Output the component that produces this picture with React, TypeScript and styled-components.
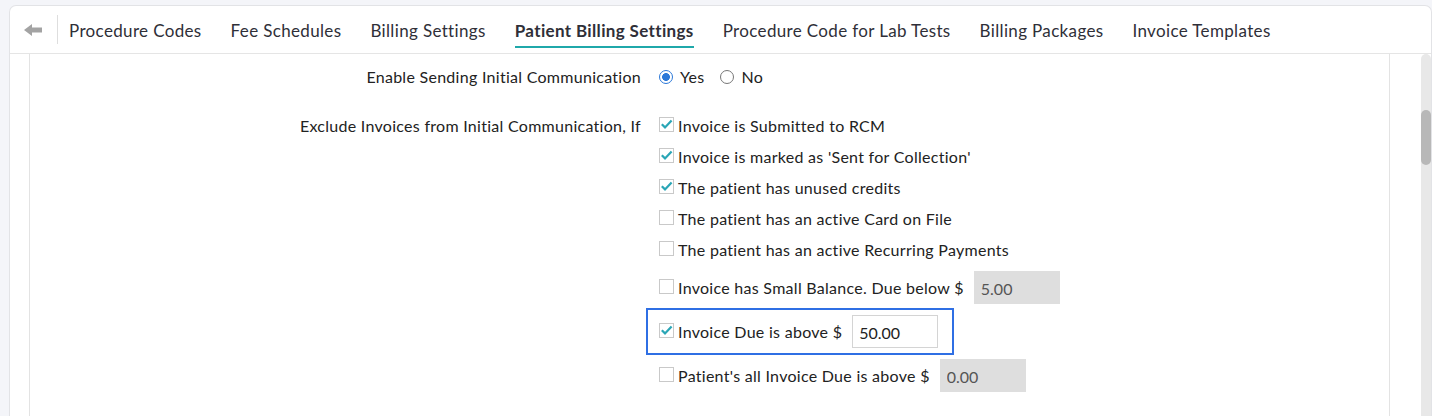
import React from 'react';
import styled, {createGlobalStyle} from 'styled-components';

const GlobalStyle = createGlobalStyle`
    body {
        margin: 0;
        background: #f4f5f9;
        font-family: Lato, "Noto Sans", "Liberation Sans", sans-serif;
        overflow: hidden;
    }
`;

const tabs = [
    'Procedure Codes',
    'Fee Schedules',
    'Billing Settings',
    'Patient Billing Settings',
    'Procedure Code for Lab Tests',
    'Billing Packages',
    'Invoice Templates',
];

type Option = {
    label: string;
    checked: boolean;
    amount?: string;
    highlight?: boolean;
};

const options: Option[] = [
    {label: 'Invoice is Submitted to RCM', checked: true},
    {label: "Invoice is marked as 'Sent for Collection'", checked: true},
    {label: 'The patient has unused credits', checked: true},
    {label: 'The patient has an active Card on File', checked: false},
    {label: 'The patient has an active Recurring Payments', checked: false},
    {label: 'Invoice has Small Balance. Due below $', checked: false, amount: '5.00'},
    {label: 'Invoice Due is above $', checked: true, amount: '50.00', highlight: true},
    {label: "Patient's all Invoice Due is above $", checked: false, amount: '0.00'},
];

const CheckBox: React.FC<{checked: boolean}> = ({checked}) => (
    <CheckSvg width="15" height="15" viewBox="0 0 15 15">
        <rect x="0.5" y="0.5" width="14" height="14" fill="#fff" stroke="#c9c9c9"/>
        {checked && <polyline points="2.8,7.2 6,10.4 12.6,3.4" fill="none" stroke="#2aa6b6" strokeWidth="2.2"/>}
    </CheckSvg>
);

const BackArrow = () => (
    <svg width="18" height="12" viewBox="0 0 18 12">
        <polygon points="0,6 8,0 8,3.5 18,3.5 18,8.5 8,8.5 8,12" fill="#a3a3a3"/>
    </svg>
);

const App: React.FunctionComponent = () => {
    return (
        <>
            <GlobalStyle/>
            <Page>
                <Card>
                    <TabBar>
                        <BackButton title="Back"><BackArrow/></BackButton>
                        <TabList>
                            {tabs.map(t => (
                                <Tab key={t} $active={t === 'Patient Billing Settings'}>{t}</Tab>
                            ))}
                        </TabList>
                    </TabBar>
                    <Body>
                        <Gutter/>
                        <Panel>
                            <FormRow>
                                <FieldLabel>Enable Sending Initial Communication</FieldLabel>
                                <RadioGroup>
                                    <RadioOption><Radio $checked/>Yes</RadioOption>
                                    <RadioOption><Radio $checked={false}/>No</RadioOption>
                                </RadioGroup>
                            </FormRow>
                            <FormRow $spaced>
                                <FieldLabel>Exclude Invoices from Initial Communication, If</FieldLabel>
                                <OptionList>
                                    {options.map(o => (
                                        <OptionRow key={o.label} $highlight={o.highlight} $tall={!!o.amount}>
                                            <CheckBox checked={o.checked}/>
                                            <OptionText>{o.label}</OptionText>
                                            {o.amount && (
                                                <AmountInput
                                                    defaultValue={o.amount}
                                                    disabled={!o.checked}
                                                />
                                            )}
                                        </OptionRow>
                                    ))}
                                </OptionList>
                            </FormRow>
                        </Panel>
                        <ScrollArea>
                            <ScrollTrack>
                                <ScrollThumb/>
                            </ScrollTrack>
                        </ScrollArea>
                    </Body>
                </Card>
            </Page>
        </>
    );
}

const Page = styled.div`
    padding: 5px 0 0 9px;
`;

const Card = styled.div`
    background: #fff;
    border: 1px solid #e2e3e6;
    border-bottom: none;
    border-radius: 7px 7px 0 0;
`;

const TabBar = styled.div`
    display: flex;
    align-items: flex-start;
    height: 47px;
    border-bottom: 1px solid #e5e5e5;
`;

const BackButton = styled.div`
    display: flex;
    align-items: center;
    height: 29px;
    margin-top: 9px;
    padding: 0 15px 0 14px;
    border-right: 1px solid #dedede;
    cursor: pointer;
`;

const TabList = styled.div`
    display: flex;
    gap: 29px;
    margin-left: 11px;
`;

const Tab = styled.div<{$active?: boolean}>`
    padding: 15px 0 5px;
    line-height: 20px;
    font-size: 17px;
    letter-spacing: 0.35px;
    color: #2f2f38;
    font-weight: ${p => (p.$active ? 700 : 400)};
    border-bottom: 2px solid ${p => (p.$active ? '#1fa8aa' : 'transparent')};
    white-space: nowrap;
    cursor: pointer;
`;

const Body = styled.div`
    display: flex;
    min-height: 370px;
`;

const Gutter = styled.div`
    width: 19px;
    flex: none;
`;

const Panel = styled.div`
    flex: 1;
    border-left: 1px solid #e3e3e3;
    border-right: 1px solid #e3e3e3;
    padding-top: 13px;
`;

const ScrollArea = styled.div`
    width: 41px;
    flex: none;
    padding-left: 31px;
    box-sizing: border-box;
`;

const ScrollTrack = styled.div`
    width: 10px;
    height: 370px;
    background: #e8e8e8;
    border-radius: 5px 5px 0 0;
    overflow: hidden;
`;

const ScrollThumb = styled.div`
    width: 10px;
    height: 55px;
    margin-top: 56px;
    background: #b8b8b8;
    border-radius: 5px;
`;

const FormRow = styled.div<{$spaced?: boolean}>`
    display: grid;
    grid-template-columns: 611px 1fr;
    column-gap: 18px;
    align-items: start;
    margin-top: ${p => (p.$spaced ? '29px' : '0')};
`;

const textStyle = `
    font-size: 16px;
    letter-spacing: 0.28px;
    line-height: 20px;
    color: #222;
`;

const FieldLabel = styled.div`
    text-align: right;
    ${textStyle}
`;

const RadioGroup = styled.div`
    display: flex;
    gap: 16px;
    ${textStyle}
`;

const RadioOption = styled.label`
    display: flex;
    align-items: center;
    gap: 7px;
`;

const Radio = styled.span<{$checked: boolean}>`
    width: 14px;
    height: 14px;
    box-sizing: border-box;
    border-radius: 50%;
    border: 1px solid ${p => (p.$checked ? '#2b78d8' : '#777')};
    background: ${p => (p.$checked ? 'radial-gradient(circle, #2b78d8 0 3.6px, #fff 4.2px)' : '#fff')};
`;

const OptionList = styled.div`
    display: flex;
    flex-direction: column;
    gap: 11px;
    align-items: flex-start;
`;

const OptionRow = styled.div<{$highlight?: boolean; $tall?: boolean}>`
    display: flex;
    align-items: center;
    min-height: ${p => (p.$tall ? '33px' : '20px')};
    ${p => p.$highlight && `
        border: 2px solid #2f6fe4;
        padding: 5px 14px 5px 11px;
        margin: -7px 0 -7px -13px;
    `}
`;

const CheckSvg = styled.svg`
    flex: none;
    margin-top: -3px;
`;

const OptionText = styled.span`
    margin-left: 4px;
    white-space: nowrap;
    ${textStyle}
`;

const AmountInput = styled.input`
    width: 86px;
    height: 33px;
    box-sizing: border-box;
    margin-left: 10px;
    padding: 2px 6px 0;
    border: 1px solid ${p => (p.disabled ? '#dedede' : '#d4d4d4')};
    background: ${p => (p.disabled ? '#dedede' : '#fff')};
    font-family: Lato, "Noto Sans", "Liberation Sans", sans-serif;
    font-size: 16px;
    color: ${p => (p.disabled ? '#555' : '#222')};
    outline: none;
`;

export default App;
